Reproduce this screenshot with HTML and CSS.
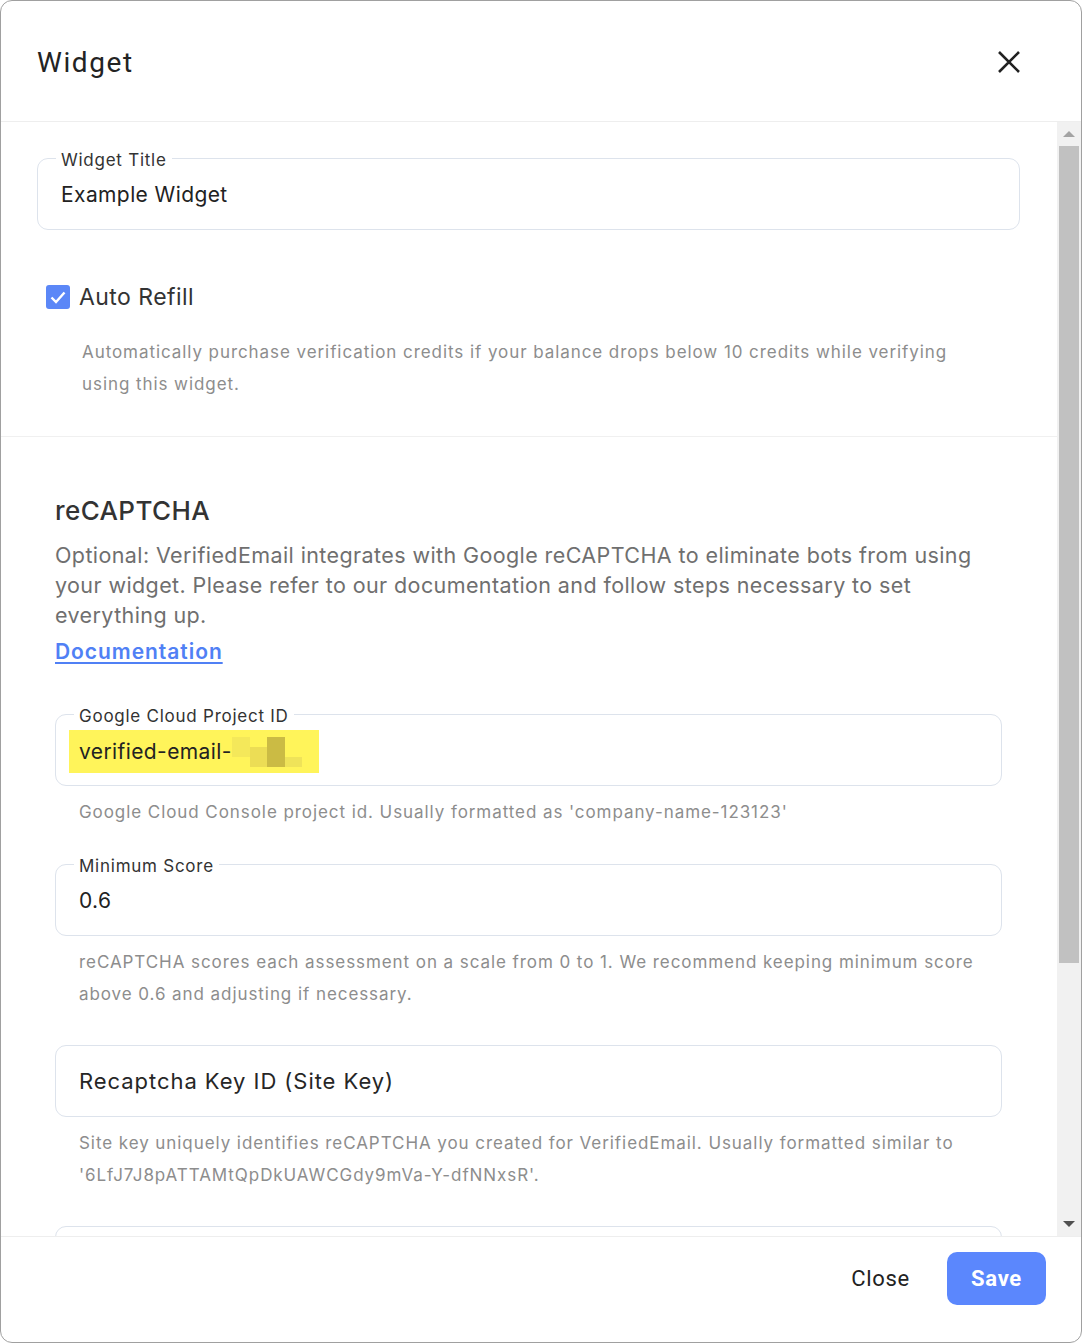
FILE: index.html
```html
<!DOCTYPE html>
<html>
<head>
    <title>Widget</title>
    <link rel="stylesheet" href="styles.css">
</head>
<body>
    <div class="dialog">
        <div class="dialog-header">
            <div class="dialog-title">Widget</div>
            <div class="dialog-close">
                <svg width="24" height="24" viewBox="0 0 24 24"><path d="M2 2 L22 22 M22 2 L2 22" stroke="#222" stroke-width="2.6" fill="none"/></svg>
            </div>
        </div>

        <div class="dialog-body">
            <div class="scroll-area">
                <div class="section-top">
                    <div class="field">
                        <span class="field-label">Widget Title</span>
                        <span class="field-value">Example Widget</span>
                    </div>

                    <div class="check-row">
                        <span class="checkbox">
                            <svg width="24" height="24" viewBox="0 0 24 24"><path d="M5.5 12.5 L10 17 L18.5 7.5" stroke="#fff" stroke-width="2.4" fill="none"/></svg>
                        </span>
                        <span class="check-label">Auto Refill</span>
                    </div>
                    <p class="helper helper-indent">Automatically purchase verification credits if your balance drops below 10 credits while verifying using this widget.</p>
                </div>

                <div class="section-recaptcha">
                    <h2 class="section-title">reCAPTCHA</h2>
                    <p class="section-desc">Optional: VerifiedEmail integrates with Google reCAPTCHA to eliminate bots from using your widget. Please refer to our documentation and follow steps necessary to set everything up.</p>
                    <a class="doc-link" href="#">Documentation</a>

                    <div class="field field-first">
                        <span class="field-label">Google Cloud Project ID</span>
                        <span class="field-value highlight">verified-email-<span class="redact">
                            <i class="px px-a"></i><i class="px px-b"></i><i class="px px-c"></i><i class="px px-d"></i>
                        </span></span>
                    </div>
                    <p class="helper">Google Cloud Console project id. Usually formatted as 'company-name-123123'</p>

                    <div class="field field-next">
                        <span class="field-label">Minimum Score</span>
                        <span class="field-value">0.6</span>
                    </div>
                    <p class="helper">reCAPTCHA scores each assessment on a scale from 0 to 1. We recommend keeping minimum score above 0.6 and adjusting if necessary.</p>

                    <div class="field field-spaced">
                        <span class="field-placeholder">Recaptcha Key ID (Site Key)</span>
                    </div>
                    <p class="helper">Site key uniquely identifies reCAPTCHA you created for VerifiedEmail. Usually formatted similar to '6LfJ7J8pATTAMtQpDkUAWCGdy9mVa-Y-dfNNxsR'.</p>

                    <div class="field field-spaced"></div>
                </div>
            </div>

            <div class="scrollbar">
                <div class="scroll-arrow arrow-up"></div>
                <div class="scroll-track">
                    <div class="scroll-thumb"></div>
                </div>
                <div class="scroll-arrow arrow-down"></div>
            </div>
        </div>

        <div class="dialog-footer">
            <button class="btn btn-text">Close</button>
            <button class="btn btn-primary">Save</button>
        </div>
    </div>
</body>
</html>
```

FILE: styles.css
```css
body {
    margin: 0;
    font-family: Inter, 'Noto Sans', sans-serif;
    background: #ffffff;
    color: #222222;
}

.dialog {
    height: 1343px;
    box-sizing: border-box;
    border: 1px solid #a0a0a0;
    border-radius: 12px;
    display: flex;
    flex-direction: column;
    overflow: hidden;
    background: #ffffff;
}

.dialog-header {
    height: 120px;
    flex: none;
    display: flex;
    align-items: center;
    justify-content: space-between;
    padding: 0 60px 0 36px;
    border-bottom: 1px solid #eeeeee;
}

.dialog-title {
    font-family: Roboto, sans-serif;
    font-size: 28px;
    color: #232323;
    letter-spacing: 1.6px;
    margin-top: 2px;
}

.dialog-close {
    width: 24px;
    height: 24px;
    margin-top: 1px;
}

.dialog-body {
    flex: 1;
    display: flex;
    min-height: 0;
    overflow: hidden;
}

.scroll-area {
    flex: 1;
    overflow: hidden;
}

/* Top section */
.section-top {
    padding: 36px 37px 36px 36px;
    border-bottom: 1px solid #f0f0f0;
}

.field {
    position: relative;
    height: 70px;
    border: 1px solid #dde3ec;
    border-radius: 11px;
    display: flex;
    align-items: center;
    padding: 0 23px;
}

.field-label {
    position: absolute;
    top: -9px;
    left: 18px;
    padding: 0 5px;
    background: #ffffff;
    font-size: 17px;
    line-height: 20px;
    color: #333333;
    letter-spacing: 0.75px;
}

.field-value {
    font-size: 21px;
    color: #222222;
    letter-spacing: 0.4px;
    margin-top: 1px;
}

.field-placeholder {
    font-size: 22px;
    color: #262626;
    letter-spacing: 0.95px;
}

.highlight {
    background: #fff45a;
    margin-left: -10px;
    padding: 7px 15px 6px 10px;
    display: inline-flex;
    align-items: center;
    margin-top: 2px;
}

.redact {
    display: inline-block;
    position: relative;
    width: 72px;
    height: 30px;
}

.px {
    position: absolute;
    display: block;
}

.px-a { left: 0; top: 0; width: 18px; height: 20px; background: #f4e85a; }
.px-b { left: 18px; top: 10px; width: 17px; height: 20px; background: #ecdd55; }
.px-c { left: 35px; top: 0; width: 18px; height: 30px; background: #cbbb44; }
.px-d { left: 53px; top: 20px; width: 17px; height: 10px; background: #efe359; }

.check-row {
    display: flex;
    align-items: center;
    margin-top: 53px;
    padding-left: 9px;
}

.checkbox {
    width: 24px;
    height: 24px;
    border-radius: 3px;
    background: #5b87f7;
    display: flex;
}

.check-label {
    font-size: 23px;
    color: #333333;
    margin-left: 9px;
    letter-spacing: 0.45px;
}

.helper {
    margin: 10px 0 0 0;
    padding: 0 24px;
    font-size: 17px;
    line-height: 32px;
    color: #8d8d8d;
    letter-spacing: 0.93px;
}

.helper-indent {
    padding-left: 45px;
    margin-top: 25px;
}

/* reCAPTCHA section */
.section-recaptcha {
    padding: 57px 55px 0 54px;
}

.section-title {
    margin: 0;
    font-size: 26px;
    line-height: 34px;
    font-weight: 500;
    color: #333333;
    letter-spacing: 0.4px;
}

.section-desc {
    margin: 12px 0 0 0;
    font-size: 21.5px;
    line-height: 30px;
    color: #6f6f6f;
    letter-spacing: 0.4px;
}

.doc-link {
    display: inline-block;
    margin-top: 7px;
    font-size: 21px;
    line-height: 30px;
    font-weight: 600;
    color: #5080f5;
    text-decoration: underline;
    text-underline-offset: 3px;
    letter-spacing: 0.95px;
}

.field-first {
    margin-top: 47px;
}

.field-next {
    margin-top: 36px;
}

.field-spaced {
    margin-top: 35px;
}

.section-recaptcha .helper {
    margin-top: 10px;
}

/* Fake scrollbar */
.scrollbar {
    width: 24px;
    flex: none;
    background: #f1f1f1;
    display: flex;
    flex-direction: column;
}

.scroll-arrow {
    height: 24px;
    flex: none;
    display: flex;
    align-items: center;
    justify-content: center;
}

.arrow-up::before {
    content: '';
    border-left: 6px solid transparent;
    border-right: 6px solid transparent;
    border-bottom: 6px solid #a3a3a3;
}

.arrow-down::before {
    content: '';
    border-left: 6px solid transparent;
    border-right: 6px solid transparent;
    border-top: 6px solid #505050;
}

.scroll-track {
    flex: 1;
    padding: 0 2px;
}

.scroll-thumb {
    height: 817px;
    background: #c1c1c1;
}

/* Footer */
.dialog-footer {
    height: 106px;
    flex: none;
    box-sizing: border-box;
    border-top: 1px solid #eeeeee;
    display: flex;
    align-items: flex-start;
    justify-content: flex-end;
    gap: 21px;
    padding: 15px 35px 0 0;
}

.btn {
    font-family: Roboto, sans-serif;
    font-size: 22px;
    border: none;
    cursor: pointer;
    letter-spacing: 0.7px;
}

.btn-text {
    background: none;
    color: #222222;
    height: 53px;
    padding: 0 16px;
}

.btn-primary {
    width: 99px;
    height: 53px;
    border-radius: 10px;
    background: #5b87fd;
    color: #ffffff;
    font-weight: 700;
}
```
